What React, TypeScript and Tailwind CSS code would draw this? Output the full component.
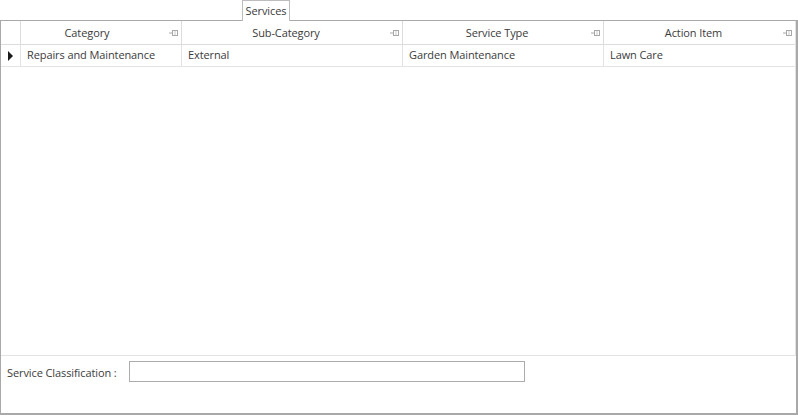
import React from "react";

function Pin() {
  return (
    <svg width="9" height="6" viewBox="0 0 9 6" className="shrink-0">
      <rect x="3.5" y="0.5" width="5" height="5" fill="none" stroke="#a8a8a8" />
      <line x1="0" y1="3" x2="3.5" y2="3" stroke="#a8a8a8" />
      <line x1="6" y1="1" x2="6" y2="5" stroke="#c8c8c8" />
    </svg>
  );
}

const cols = [
  { title: "Category", w: "w-[161px]", pr: "pr-[28px]", value: "Repairs and Maintenance" },
  { title: "Sub-Category", w: "w-[221px]", pr: "pr-[12px]", value: "External" },
  { title: "Service Type", w: "w-[201px]", pr: "pr-[12px]", value: "Garden Maintenance" },
  { title: "Action Item", w: "flex-1", pr: "pr-[12px]", value: "Lawn Care" },
];

export default function App() {
  return (
    <div
      className="w-[798px] h-[415px] bg-white flex flex-col text-[11px] tracking-[-0.1px] text-[#3b3b3b]"
      style={{ fontFamily: '"Open Sans", "Noto Sans", sans-serif' }}
    >
      <div className="h-[21px] flex pl-[242px] relative z-10 shrink-0">
        <div className="w-[48px] h-[21px] border border-b-0 border-[#bdbdbd] bg-white flex items-start justify-center pt-[2px] text-[#3b3b3b]">
          Services
        </div>
      </div>
      <div className="flex-1 -mt-px border border-[#a9a9a9] border-r-2 border-b-2 flex flex-col min-h-0">
        <div className="h-[335px] border-b border-r border-[#e3e3e3] flex flex-col shrink-0">
          <div className="h-[24px] flex border-b border-[#dcdcdc] shrink-0">
            <div className="w-[19px] border-r border-[#dcdcdc] ml-px" />
            {cols.map((c, i) => (
              <div
                key={c.title}
                className={`${c.w} ${c.pr} ${i < 3 ? "border-r border-[#dcdcdc]" : ""} flex items-center pt-px relative`}
              >
                <span className="flex-1 text-center">{c.title}</span>
                <span className="absolute right-[3px] top-[9px]">
                  <Pin />
                </span>
              </div>
            ))}
          </div>
          <div className="h-[22px] flex border-b border-[#e3e3e3] shrink-0">
            <div className="w-[19px] border-r border-[#e3e3e3] ml-px flex items-center justify-center">
              <svg width="6" height="10" viewBox="0 0 6 10">
                <polygon points="0,0 5,5 0,10" fill="#1a1a1a" />
              </svg>
            </div>
            {cols.map((c, i) => (
              <div
                key={c.title}
                className={`${c.w} ${i < 3 ? "border-r border-[#e3e3e3]" : ""} flex items-center pl-[6px]`}
              >
                {c.value}
              </div>
            ))}
          </div>
        </div>
        <div className="flex items-center pl-[6px] pt-[5px]">
          <span className="w-[122px] shrink-0 pt-[3px]">Service Classification :</span>
          <div className="w-[396px] h-[21px] border border-[#acacac] bg-white" />
        </div>
      </div>
    </div>
  );
}
